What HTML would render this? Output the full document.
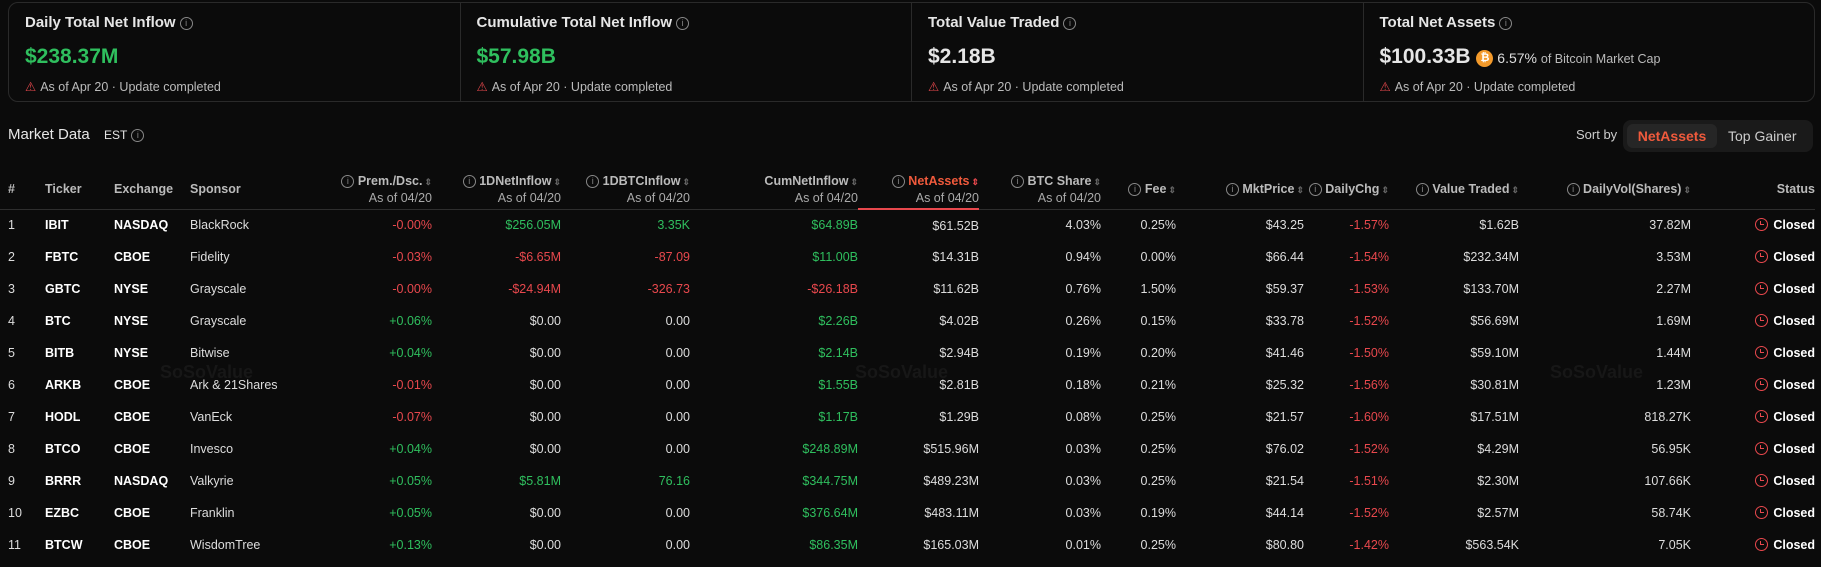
<!DOCTYPE html>
<html><head><meta charset="utf-8"><style>
*{box-sizing:border-box;margin:0;padding:0}
body{width:1821px;height:567px;background:#0b0b0b;color:#e6e6e6;font-family:"Liberation Sans",sans-serif;overflow:hidden;position:relative}
.cards{position:absolute;left:8px;top:2px;width:1807px;height:100px;border:1px solid #2a2a2a;border-radius:10px;display:flex}
.card{flex:1;padding:0 0 0 15px;border-left:1px solid #2a2a2a;position:relative}
.card:first-child{border-left:none}
.t{position:absolute;top:11px;left:16px;font-size:15px;color:#e6e6e6;font-weight:bold}
.v{position:absolute;top:42px;left:16px;font-size:21px;font-weight:bold}
.n{position:absolute;top:76px;left:16px;font-size:12.5px;color:#bbb;display:flex;align-items:center;gap:4px}
.g{color:#2fbf5e}.r{color:#e8484d}
.i{display:inline-block;width:13px;height:13px;border:1px solid #888;border-radius:50%;font-size:9px;line-height:11px;text-align:center;color:#888;vertical-align:middle;font-weight:normal;margin-left:4px}
.md{position:absolute;left:8px;top:126px;font-size:15px}
.est{position:absolute;left:104px;top:128px;font-size:12px}
.sb{position:absolute;left:1576px;top:127px;font-size:13px;color:#ccc}
.tog{position:absolute;left:1623px;top:120px;width:190px;height:32px;background:#1a1a1a;border-radius:8px}
.tog .a{position:absolute;left:4px;top:4px;width:90px;height:24px;background:#262626;border-radius:6px;color:#f05a3c;font-weight:bold;font-size:14px;text-align:center;line-height:24px}
.tog .b{position:absolute;left:105px;top:4px;font-size:14px;color:#ccc;line-height:24px}
table{position:absolute;left:0;top:170px;width:1815px;border-collapse:collapse;table-layout:fixed;font-size:12.5px}
th{height:39px;font-weight:bold;color:#bbb;border-bottom:1px solid #2e2e2e;font-size:12.5px;line-height:16px}
th small{display:block;font-weight:normal;font-size:12.5px;color:#aaa}
td{height:32px;color:#ddd}
.l{text-align:left}.rt{text-align:right}
.s{color:#666;font-size:9px;margin-left:2px}
.tk{font-weight:bold;color:#fff}
.cl{font-weight:bold;color:#fff}
.ck{display:inline-block;width:13px;height:13px;border:1.5px solid #e8484d;border-radius:50%;vertical-align:-2px;margin-right:5px;position:relative}
.ck:after{content:"";position:absolute;left:4px;top:2px;width:3px;height:3px;border-left:1.5px solid #e8484d;border-bottom:1.5px solid #e8484d}
.na{border-bottom:2px solid #e8484d;color:#f05a3c}
.wm{position:absolute;top:362px;font-size:18px;font-weight:bold;color:#171717}
</style></head><body>
<div class="cards">
<div class="card"><div class="t">Daily Total Net Inflow<span class="i">i</span></div><div class="v g">$238.37M</div><div class="n"><span class="r">⚠</span>As of Apr 20 · Update completed</div></div>
<div class="card"><div class="t">Cumulative Total Net Inflow<span class="i">i</span></div><div class="v g">$57.98B</div><div class="n"><span class="r">⚠</span>As of Apr 20 · Update completed</div></div>
<div class="card"><div class="t">Total Value Traded<span class="i">i</span></div><div class="v">$2.18B</div><div class="n"><span class="r">⚠</span>As of Apr 20 · Update completed</div></div>
<div class="card"><div class="t">Total Net Assets<span class="i">i</span></div><div class="v">$100.33B <span style="display:inline-block;width:17px;height:17px;border-radius:50%;background:#f39a2b;color:#fff;font-size:11px;text-align:center;line-height:17px;vertical-align:2px">₿</span><span style="font-size:14px;font-weight:normal;color:#ddd"> 6.57% <span style="font-size:12.5px;color:#bbb">of Bitcoin Market Cap</span></span></div><div class="n"><span class="r">⚠</span>As of Apr 20 · Update completed</div></div>
</div>
<div class="md">Market Data</div><div class="est">EST<span class="i">i</span></div>
<div class="sb">Sort by</div>
<div class="tog"><div class="a">NetAssets</div><div class="b">Top Gainer</div></div>
<div class="wm" style="left:160px">SoSoValue</div><div class="wm" style="left:855px">SoSoValue</div><div class="wm" style="left:1550px">SoSoValue</div>
<table>
<colgroup><col style="width:45px"><col style="width:69px"><col style="width:76px"><col style="width:140px"><col style="width:102px"><col style="width:129px"><col style="width:129px"><col style="width:168px"><col style="width:121px"><col style="width:122px"><col style="width:75px"><col style="width:128px"><col style="width:85px"><col style="width:130px"><col style="width:172px"><col style="width:124px"></colgroup>
<tr><th class="l" style="padding-left:8px">#</th><th class="l">Ticker</th><th class="l">Exchange</th><th class="l">Sponsor</th>
<th class="rt"><span class="i">i</span> Prem./Dsc.<span class="s">⇕</span><small>As of 04/20</small></th>
<th class="rt"><span class="i">i</span> 1DNetInflow<span class="s">⇕</span><small>As of 04/20</small></th>
<th class="rt"><span class="i">i</span> 1DBTCInflow<span class="s">⇕</span><small>As of 04/20</small></th>
<th class="rt">CumNetInflow<span class="s">⇕</span><small>As of 04/20</small></th>
<th class="rt na"><span class="i">i</span> NetAssets<span class="s" style="color:#e8484d">⇕</span><small>As of 04/20</small></th>
<th class="rt"><span class="i">i</span> BTC Share<span class="s">⇕</span><small>As of 04/20</small></th>
<th class="rt"><span class="i">i</span> Fee<span class="s">⇕</span></th>
<th class="rt"><span class="i">i</span> MktPrice<span class="s">⇕</span></th>
<th class="rt"><span class="i">i</span> DailyChg<span class="s">⇕</span></th>
<th class="rt"><span class="i">i</span> Value Traded<span class="s">⇕</span></th>
<th class="rt"><span class="i">i</span> DailyVol(Shares)<span class="s">⇕</span></th>
<th class="rt">Status</th></tr>
<tr><td style="padding-left:8px">1</td><td class="tk">IBIT</td><td class="tk">NASDAQ</td><td>BlackRock</td><td class="rt r">-0.00%</td><td class="rt g">$256.05M</td><td class="rt g">3.35K</td><td class="rt g">$64.89B</td><td class="rt">$61.52B</td><td class="rt">4.03%</td><td class="rt">0.25%</td><td class="rt">$43.25</td><td class="rt r">-1.57%</td><td class="rt">$1.62B</td><td class="rt">37.82M</td><td class="rt"><span class="ck"></span><span class="cl">Closed</span></td></tr>
<tr><td style="padding-left:8px">2</td><td class="tk">FBTC</td><td class="tk">CBOE</td><td>Fidelity</td><td class="rt r">-0.03%</td><td class="rt r">-$6.65M</td><td class="rt r">-87.09</td><td class="rt g">$11.00B</td><td class="rt">$14.31B</td><td class="rt">0.94%</td><td class="rt">0.00%</td><td class="rt">$66.44</td><td class="rt r">-1.54%</td><td class="rt">$232.34M</td><td class="rt">3.53M</td><td class="rt"><span class="ck"></span><span class="cl">Closed</span></td></tr>
<tr><td style="padding-left:8px">3</td><td class="tk">GBTC</td><td class="tk">NYSE</td><td>Grayscale</td><td class="rt r">-0.00%</td><td class="rt r">-$24.94M</td><td class="rt r">-326.73</td><td class="rt r">-$26.18B</td><td class="rt">$11.62B</td><td class="rt">0.76%</td><td class="rt">1.50%</td><td class="rt">$59.37</td><td class="rt r">-1.53%</td><td class="rt">$133.70M</td><td class="rt">2.27M</td><td class="rt"><span class="ck"></span><span class="cl">Closed</span></td></tr>
<tr><td style="padding-left:8px">4</td><td class="tk">BTC</td><td class="tk">NYSE</td><td>Grayscale</td><td class="rt g">+0.06%</td><td class="rt">$0.00</td><td class="rt">0.00</td><td class="rt g">$2.26B</td><td class="rt">$4.02B</td><td class="rt">0.26%</td><td class="rt">0.15%</td><td class="rt">$33.78</td><td class="rt r">-1.52%</td><td class="rt">$56.69M</td><td class="rt">1.69M</td><td class="rt"><span class="ck"></span><span class="cl">Closed</span></td></tr>
<tr><td style="padding-left:8px">5</td><td class="tk">BITB</td><td class="tk">NYSE</td><td>Bitwise</td><td class="rt g">+0.04%</td><td class="rt">$0.00</td><td class="rt">0.00</td><td class="rt g">$2.14B</td><td class="rt">$2.94B</td><td class="rt">0.19%</td><td class="rt">0.20%</td><td class="rt">$41.46</td><td class="rt r">-1.50%</td><td class="rt">$59.10M</td><td class="rt">1.44M</td><td class="rt"><span class="ck"></span><span class="cl">Closed</span></td></tr>
<tr><td style="padding-left:8px">6</td><td class="tk">ARKB</td><td class="tk">CBOE</td><td>Ark &amp; 21Shares</td><td class="rt r">-0.01%</td><td class="rt">$0.00</td><td class="rt">0.00</td><td class="rt g">$1.55B</td><td class="rt">$2.81B</td><td class="rt">0.18%</td><td class="rt">0.21%</td><td class="rt">$25.32</td><td class="rt r">-1.56%</td><td class="rt">$30.81M</td><td class="rt">1.23M</td><td class="rt"><span class="ck"></span><span class="cl">Closed</span></td></tr>
<tr><td style="padding-left:8px">7</td><td class="tk">HODL</td><td class="tk">CBOE</td><td>VanEck</td><td class="rt r">-0.07%</td><td class="rt">$0.00</td><td class="rt">0.00</td><td class="rt g">$1.17B</td><td class="rt">$1.29B</td><td class="rt">0.08%</td><td class="rt">0.25%</td><td class="rt">$21.57</td><td class="rt r">-1.60%</td><td class="rt">$17.51M</td><td class="rt">818.27K</td><td class="rt"><span class="ck"></span><span class="cl">Closed</span></td></tr>
<tr><td style="padding-left:8px">8</td><td class="tk">BTCO</td><td class="tk">CBOE</td><td>Invesco</td><td class="rt g">+0.04%</td><td class="rt">$0.00</td><td class="rt">0.00</td><td class="rt g">$248.89M</td><td class="rt">$515.96M</td><td class="rt">0.03%</td><td class="rt">0.25%</td><td class="rt">$76.02</td><td class="rt r">-1.52%</td><td class="rt">$4.29M</td><td class="rt">56.95K</td><td class="rt"><span class="ck"></span><span class="cl">Closed</span></td></tr>
<tr><td style="padding-left:8px">9</td><td class="tk">BRRR</td><td class="tk">NASDAQ</td><td>Valkyrie</td><td class="rt g">+0.05%</td><td class="rt g">$5.81M</td><td class="rt g">76.16</td><td class="rt g">$344.75M</td><td class="rt">$489.23M</td><td class="rt">0.03%</td><td class="rt">0.25%</td><td class="rt">$21.54</td><td class="rt r">-1.51%</td><td class="rt">$2.30M</td><td class="rt">107.66K</td><td class="rt"><span class="ck"></span><span class="cl">Closed</span></td></tr>
<tr><td style="padding-left:8px">10</td><td class="tk">EZBC</td><td class="tk">CBOE</td><td>Franklin</td><td class="rt g">+0.05%</td><td class="rt">$0.00</td><td class="rt">0.00</td><td class="rt g">$376.64M</td><td class="rt">$483.11M</td><td class="rt">0.03%</td><td class="rt">0.19%</td><td class="rt">$44.14</td><td class="rt r">-1.52%</td><td class="rt">$2.57M</td><td class="rt">58.74K</td><td class="rt"><span class="ck"></span><span class="cl">Closed</span></td></tr>
<tr><td style="padding-left:8px">11</td><td class="tk">BTCW</td><td class="tk">CBOE</td><td>WisdomTree</td><td class="rt g">+0.13%</td><td class="rt">$0.00</td><td class="rt">0.00</td><td class="rt g">$86.35M</td><td class="rt">$165.03M</td><td class="rt">0.01%</td><td class="rt">0.25%</td><td class="rt">$80.80</td><td class="rt r">-1.42%</td><td class="rt">$563.54K</td><td class="rt">7.05K</td><td class="rt"><span class="ck"></span><span class="cl">Closed</span></td></tr>
</table>
</body></html>
